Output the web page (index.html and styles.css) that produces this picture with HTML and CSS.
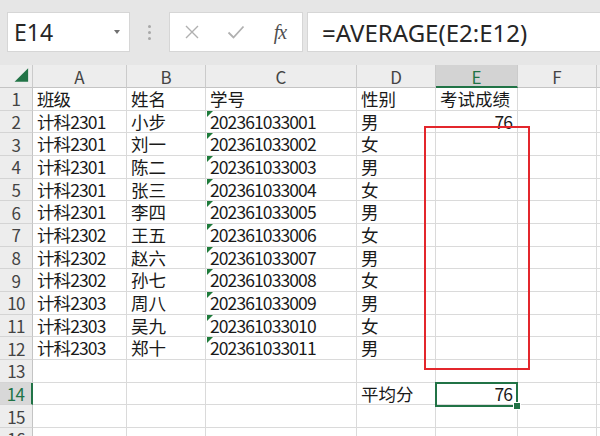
FILE: index.html
```html
<!DOCTYPE html>
<html lang="zh-CN">
<head>
<meta charset="utf-8">
<title>Sheet</title>
<link rel="stylesheet" href="styles.css">
</head>
<body>
<div class="app">
  <div class="toolbar">
    <div class="namebox"><span class="nb-text">E14</span><span class="nb-arrow"></span></div>
    <div class="grip"><i></i><i></i><i></i></div>
    <div class="fxbox">
      <span class="fxbtn">
        <svg width="16" height="16" viewBox="0 0 16 16"><path d="M2 2 L14 14 M14 2 L2 14" stroke="#b0b0b0" stroke-width="1.4" fill="none"/></svg>
      </span>
      <span class="fxbtn">
        <svg width="18" height="16" viewBox="0 0 18 16"><path d="M1.5 8.5 L6.5 13.5 L16.5 2.5" stroke="#b0b0b0" stroke-width="1.8" fill="none"/></svg>
      </span>
      <span class="fxbtn fxtext">fx</span>
    </div>
    <div class="formula">=AVERAGE(E2:E12)</div>
  </div>

  <div class="sheet">
    <div class="hd corner"><svg width="33" height="23" viewBox="0 0 33 23"><polygon points="29,3 29,17 15,17" fill="#217346"/></svg></div>
    <div class="hd">A</div><div class="hd">B</div><div class="hd">C</div><div class="hd">D</div><div class="hd sel">E</div><div class="hd">F</div><div class="hd"></div>

    <div class="rh">1</div><div class="c n">班级</div><div class="c">姓名</div><div class="c">学号</div><div class="c">性别</div><div class="c">考试成绩</div><div class="c"></div><div class="c"></div>
    <div class="rh">2</div><div class="c n">计科2301</div><div class="c">小步</div><div class="c n tx">202361033001</div><div class="c">男</div><div class="c n r">76</div><div class="c"></div><div class="c"></div>
    <div class="rh">3</div><div class="c n">计科2301</div><div class="c">刘一</div><div class="c n tx">202361033002</div><div class="c">女</div><div class="c"></div><div class="c"></div><div class="c"></div>
    <div class="rh">4</div><div class="c n">计科2301</div><div class="c">陈二</div><div class="c n tx">202361033003</div><div class="c">男</div><div class="c"></div><div class="c"></div><div class="c"></div>
    <div class="rh">5</div><div class="c n">计科2301</div><div class="c">张三</div><div class="c n tx">202361033004</div><div class="c">女</div><div class="c"></div><div class="c"></div><div class="c"></div>
    <div class="rh">6</div><div class="c n">计科2301</div><div class="c">李四</div><div class="c n tx">202361033005</div><div class="c">男</div><div class="c"></div><div class="c"></div><div class="c"></div>
    <div class="rh">7</div><div class="c n">计科2302</div><div class="c">王五</div><div class="c n tx">202361033006</div><div class="c">女</div><div class="c"></div><div class="c"></div><div class="c"></div>
    <div class="rh">8</div><div class="c n">计科2302</div><div class="c">赵六</div><div class="c n tx">202361033007</div><div class="c">男</div><div class="c"></div><div class="c"></div><div class="c"></div>
    <div class="rh">9</div><div class="c n">计科2302</div><div class="c">孙七</div><div class="c n tx">202361033008</div><div class="c">女</div><div class="c"></div><div class="c"></div><div class="c"></div>
    <div class="rh">10</div><div class="c n">计科2303</div><div class="c">周八</div><div class="c n tx">202361033009</div><div class="c">男</div><div class="c"></div><div class="c"></div><div class="c"></div>
    <div class="rh">11</div><div class="c n">计科2303</div><div class="c">吴九</div><div class="c n tx">202361033010</div><div class="c">女</div><div class="c"></div><div class="c"></div><div class="c"></div>
    <div class="rh">12</div><div class="c n">计科2303</div><div class="c">郑十</div><div class="c n tx">202361033011</div><div class="c">男</div><div class="c"></div><div class="c"></div><div class="c"></div>
    <div class="rh">13</div><div class="c"></div><div class="c"></div><div class="c"></div><div class="c"></div><div class="c"></div><div class="c"></div><div class="c"></div>
    <div class="rh rsel">14</div><div class="c"></div><div class="c"></div><div class="c"></div><div class="c">平均分</div><div class="c n r">76</div><div class="c"></div><div class="c"></div>
    <div class="rh">15</div><div class="c"></div><div class="c"></div><div class="c"></div><div class="c"></div><div class="c"></div><div class="c"></div><div class="c"></div>
    <div class="rh">16</div><div class="c"></div><div class="c"></div><div class="c"></div><div class="c"></div><div class="c"></div><div class="c"></div><div class="c"></div>

    <div class="redbox"></div>
    <div class="selbox"><span class="handle"></span></div>
  </div>
</div>
</body>
</html>
```

FILE: styles.css
```css
html, body {
  margin: 0;
  padding: 0;
  background: #fff;
  overflow: hidden;
}

.app {
  width: 600px;
  height: 436px;
  overflow: hidden;
  font-family: "Noto Sans CJK SC", sans-serif;
}

/* ---------- toolbar ---------- */
.toolbar {
  height: 65px;
  box-sizing: border-box;
  padding-top: 12px;
  background: #e6e6e6;
  display: flex;
  align-items: flex-start;
}

.namebox {
  margin-left: 7px;
  width: 123px;
  height: 40px;
  box-sizing: border-box;
  background: #fff;
  border: 1px solid #d6d6d6;
  display: flex;
  align-items: center;
  padding-left: 6px;
  padding-right: 9px;
}

.nb-text {
  font: 23px "Noto Sans", sans-serif;
  color: #262626;
  line-height: 1;
}

.nb-arrow {
  margin-left: auto;
  width: 0;
  height: 0;
  border-left: 3px solid transparent;
  border-right: 3px solid transparent;
  border-top: 4px solid #707070;
}

.grip {
  width: 39px;
  height: 40px;
  display: flex;
  flex-direction: column;
  align-items: center;
  justify-content: center;
  gap: 3px;
}

.grip i {
  display: block;
  width: 3px;
  height: 3px;
  border-radius: 50%;
  background: #a8a8a8;
}

.fxbox {
  width: 134px;
  height: 40px;
  box-sizing: border-box;
  background: #fff;
  border: 1px solid #d6d6d6;
  display: flex;
  align-items: center;
}

.fxbtn {
  width: 44px;
  display: flex;
  justify-content: center;
  align-items: center;
}

.fxtext {
  font: italic 20px "Liberation Serif", serif;
  color: #505050;
  letter-spacing: -1px;
}

.formula {
  flex: 1;
  margin-left: 4px;
  height: 40px;
  box-sizing: border-box;
  background: #fff;
  border: 1px solid #d6d6d6;
  border-right: none;
  padding-left: 14px;
  display: flex;
  align-items: center;
  font: 24px "Noto Sans", sans-serif;
  color: #262626;
  white-space: nowrap;
}

/* ---------- sheet ---------- */
.sheet {
  position: relative;
  display: grid;
  grid-template-columns: 33px 94px 79px 151px 79px 82px 79px 1fr;
  grid-template-rows: 23px repeat(16, 22.66px);
  height: 371px;
  overflow: hidden;
}

.hd {
  background: #ededed;
  border-right: 1px solid #cbcbcb;
  border-bottom: 1px solid #c4c4c4;
  box-sizing: border-box;
  display: flex;
  align-items: center;
  justify-content: center;
  font-size: 17px;
  line-height: 1;
  color: #444;
}

.corner svg {
  display: block;
}

.hd.sel {
  background: #d3d3d3;
  border-bottom: 2px solid #217346;
  padding-top: 1px;
  color: #217346;
}

.rh {
  background: #ededed;
  border-right: 1px solid #c4c4c4;
  border-bottom: 1px solid #d4d4d4;
  box-sizing: border-box;
  display: flex;
  align-items: center;
  justify-content: center;
  font-size: 17px;
  line-height: 1;
  color: #444;
  letter-spacing: -0.6px;
}

.rh.rsel {
  background: #d8d8d8;
  border-right: 2px solid #217346;
  color: #217346;
}

.c {
  position: relative;
  border-right: 1px solid #dadada;
  border-bottom: 1px solid #dadada;
  box-sizing: border-box;
  display: flex;
  align-items: center;
  padding-left: 4px;
  font-size: 17.5px;
  line-height: 1;
  color: #1a1a1a;
  white-space: nowrap;
  overflow: visible;
}

.c.n {
  letter-spacing: -0.9px;
}

.c.r {
  justify-content: flex-end;
  padding-right: 5px;
}

.c.tx::before {
  content: "";
  position: absolute;
  left: 1px;
  top: 0;
  width: 0;
  height: 0;
  border-top: 6px solid #1e7b3b;
  border-right: 6px solid transparent;
}

.redbox {
  position: absolute;
  left: 424px;
  top: 61px;
  width: 106px;
  height: 244px;
  box-sizing: border-box;
  border: 2px solid #e3262c;
  pointer-events: none;
}

.selbox {
  position: absolute;
  left: 435px;
  top: 317px;
  width: 83px;
  height: 25px;
  box-sizing: border-box;
  border: 2px solid #217346;
}

.handle {
  position: absolute;
  right: -5px;
  bottom: -5px;
  width: 6px;
  height: 6px;
  background: #217346;
  border: 1px solid #fff;
}
```
